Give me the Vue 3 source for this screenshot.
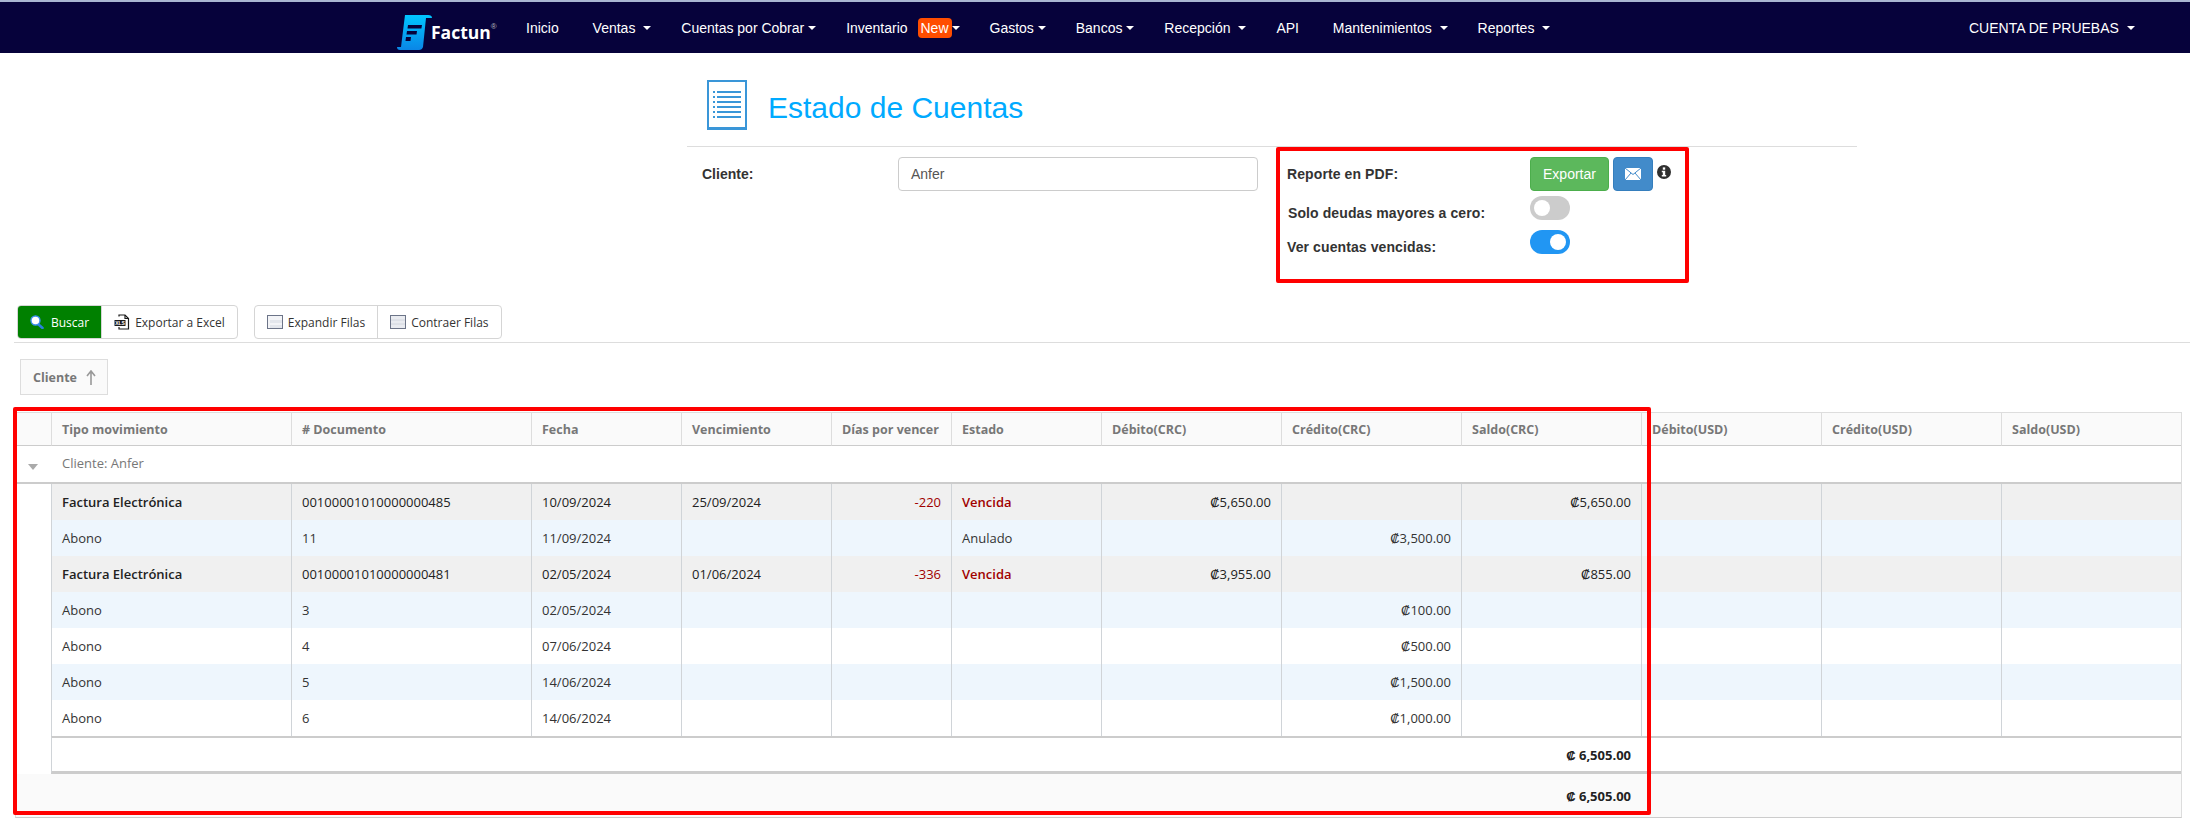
<script setup>
const menu = [
  { label: 'Inicio' },
  { label: 'Ventas', caret: true, spaced: true },
  { label: 'Cuentas por Cobrar', caret: true },
  { label: 'Inventario', caret: true, badge: 'New' },
  { label: 'Gastos', caret: true },
  { label: 'Bancos', caret: true },
  { label: 'Recepción', caret: true, spaced: true },
  { label: 'API' },
  { label: 'Mantenimientos', caret: true, spaced: true },
  { label: 'Reportes', caret: true, spaced: true },
]

const columns = [
  'Tipo movimiento', '# Documento', 'Fecha', 'Vencimiento', 'Días por vencer', 'Estado',
  'Débito(CRC)', 'Crédito(CRC)', 'Saldo(CRC)', 'Débito(USD)', 'Crédito(USD)', 'Saldo(USD)',
]
const widths = [35, 240, 240, 150, 150, 120, 150, 180, 180, 180, 180, 180, 180]

const rows = [
  { tipo: 'Factura Electrónica', doc: '00100001010000000485', fecha: '10/09/2024', venc: '25/09/2024', dias: '-220', estado: 'Vencida', deb: '₡5,650.00', cred: '', saldo: '₡5,650.00', main: true },
  { tipo: 'Abono', doc: '11', fecha: '11/09/2024', venc: '', dias: '', estado: 'Anulado', deb: '', cred: '₡3,500.00', saldo: '' },
  { tipo: 'Factura Electrónica', doc: '00100001010000000481', fecha: '02/05/2024', venc: '01/06/2024', dias: '-336', estado: 'Vencida', deb: '₡3,955.00', cred: '', saldo: '₡855.00', main: true },
  { tipo: 'Abono', doc: '3', fecha: '02/05/2024', venc: '', dias: '', estado: '', deb: '', cred: '₡100.00', saldo: '' },
  { tipo: 'Abono', doc: '4', fecha: '07/06/2024', venc: '', dias: '', estado: '', deb: '', cred: '₡500.00', saldo: '' },
  { tipo: 'Abono', doc: '5', fecha: '14/06/2024', venc: '', dias: '', estado: '', deb: '', cred: '₡1,500.00', saldo: '' },
  { tipo: 'Abono', doc: '6', fecha: '14/06/2024', venc: '', dias: '', estado: '', deb: '', cred: '₡1,000.00', saldo: '' },
]

function rowClass(r, i) {
  if (r.main) return 'row-main'
  return i % 2 === 1 ? 'row-blue' : 'row-white'
}
</script>

<template>
  <div class="page">
    <header class="navbar">
      <a class="logo">
        <svg class="logo-mark" viewBox="0 0 36 36" width="36" height="36">
          <defs>
            <linearGradient id="lg" x1="0" y1="0" x2="0" y2="1">
              <stop offset="0" stop-color="#00c6ff" />
              <stop offset="1" stop-color="#0a86e6" />
            </linearGradient>
          </defs>
          <path d="M8 1 H31 Q35 1 35 4 L29 4 L26 33 Q25 36 22 36 H3 Q0 36 0 33 H4 Z" fill="url(#lg)" />
          <path d="M11 11 H25 L24.4 14.5 H10.5 Z M10 17 H20 L19.5 20.5 H9.5 Z M9 23 H14 L13.5 27 H8.5 Z" fill="#06023b" />
        </svg>
        <span class="logo-text">Factun</span><span class="logo-reg">®</span>
      </a>
      <nav class="menu">
        <a v-for="m in menu" :key="m.label" class="menu-item">
          {{ m.label }}
          <span v-if="m.badge" class="badge">{{ m.badge }}</span>
          <i v-if="m.caret" class="caret" :class="{ spaced: m.spaced }"></i>
        </a>
      </nav>
      <a class="menu-item account">CUENTA DE PRUEBAS <i class="caret spaced"></i></a>
    </header>

    <section class="head">
      <div class="title-row">
        <svg class="doc-icon" viewBox="0 0 40 50" width="40" height="50">
          <rect x="1" y="1" width="38" height="48" fill="#fff" stroke="#3a96d8" stroke-width="2" />
          <rect x="0" y="47" width="40" height="3" fill="#3a96d8" />
          <g fill="#3a96d8">
            <rect x="6" y="11" width="2" height="2" /><rect x="10" y="11" width="24" height="2" />
            <rect x="6" y="16" width="2" height="2" /><rect x="10" y="16" width="24" height="2" />
            <rect x="6" y="21" width="2" height="2" /><rect x="10" y="21" width="24" height="2" />
            <rect x="6" y="26" width="2" height="2" /><rect x="10" y="26" width="24" height="2" />
            <rect x="6" y="31" width="2" height="2" /><rect x="10" y="31" width="24" height="2" />
            <rect x="6" y="36" width="2" height="2" /><rect x="10" y="36" width="24" height="2" />
          </g>
        </svg>
        <h1>Estado de Cuentas</h1>
      </div>
      <div class="filters">
        <div class="client">
          <label>Cliente:</label>
          <div class="input">Anfer</div>
        </div>
        <div class="options">
          <div class="opt opt-1">
            <label>Reporte en PDF:</label>
            <button class="btn btn-green">Exportar</button>
            <button class="btn btn-blue">
              <svg viewBox="0 0 16 12" width="16" height="12">
                <rect width="16" height="12" fill="#fff" />
                <path d="M0 0 L8 6.5 L16 0 M0 12 L6 5 M16 12 L10 5" fill="none" stroke="#428bca" stroke-width="1" />
              </svg>
            </button>
            <svg class="info" viewBox="0 0 14 14" width="14" height="14">
              <circle cx="7" cy="7" r="7" fill="#2f2f2f" />
              <rect x="5.8" y="2.4" width="2.4" height="2.3" fill="#fff" />
              <path d="M4.8 5.8 H8.2 V10 H9.2 V11.4 H4.8 V10 H5.8 V7.2 H4.8 Z" fill="#fff" />
            </svg>
          </div>
          <div class="opt opt-2">
            <label class="indent">Solo deudas mayores a cero:</label>
            <span class="switch"><i></i></span>
          </div>
          <div class="opt opt-3">
            <label>Ver cuentas vencidas:</label>
            <span class="switch on"><i></i></span>
          </div>
        </div>
      </div>
    </section>

    <div class="toolbar">
      <div class="tgroup">
        <a class="tbtn tbtn-search">
          <svg viewBox="0 0 14 14" width="14" height="14">
            <path d="M8 9 L12.5 13" stroke="#2b7fe0" stroke-width="2.6" stroke-linecap="round" />
            <circle cx="5.5" cy="5.5" r="4.5" fill="#fff" stroke="#3d8ff0" stroke-width="1.4" />
          </svg>
          Buscar
        </a>
        <a class="tbtn">
          <svg viewBox="0 0 16 16" width="16" height="16">
            <path d="M5 2.5 V1 H11 L14.5 4.5 V15 H5 V13" fill="#fff" stroke="#1a1a1a" stroke-width="1.2" />
            <path d="M11 1 V4.5 H14.5" fill="none" stroke="#1a1a1a" stroke-width="1.2" />
            <rect x="0.5" y="6" width="11" height="6" fill="#1a1a1a" />
            <text x="6" y="11" text-anchor="middle" font-size="5" font-family="Liberation Sans, sans-serif" font-weight="700" fill="#fff">XLS</text>
          </svg>
          Exportar a Excel
        </a>
      </div>
      <div class="tgroup">
        <a class="tbtn">
          <svg viewBox="0 0 16 14" width="16" height="14">
            <rect x="0.5" y="0.5" width="15" height="13" fill="#f3f4f7" stroke="#6c7488" />
            <rect x="3" y="5" width="12" height="3" fill="#e3e6ec" />
            <rect x="3" y="10" width="12" height="3" fill="#e3e6ec" />
          </svg>
          Expandir Filas
        </a>
        <a class="tbtn">
          <svg viewBox="0 0 16 14" width="16" height="14">
            <rect x="0.5" y="0.5" width="15" height="13" fill="#e9ebf0" stroke="#6c7488" />
            <path d="M1 5 H15 M1 9 H15" stroke="#d2d6de" />
          </svg>
          Contraer Filas
        </a>
      </div>
    </div>

    <div class="groupbar">
      <div class="chip">
        Cliente
        <svg viewBox="0 0 10 15" width="10" height="15">
          <path d="M5 15 V2 M1 6 L5 1 L9 6" fill="none" stroke="#999" stroke-width="1.6" />
        </svg>
      </div>
    </div>

    <div class="grid">
      <table>
        <colgroup>
          <col v-for="(w, i) in widths" :key="i" :style="{ width: w + 'px' }" />
        </colgroup>
        <thead>
          <tr>
            <th class="hier"></th>
            <th v-for="c in columns" :key="c">{{ c }}</th>
          </tr>
        </thead>
        <tbody>
          <tr class="group-row">
            <td class="hier"><i class="tri"></i></td>
            <td colspan="12"><span class="group-text">Cliente: Anfer</span></td>
          </tr>
          <tr v-for="(r, i) in rows" :key="i" :class="rowClass(r, i)">
            <td class="hier"></td>
            <td>{{ r.tipo }}</td>
            <td>{{ r.doc }}</td>
            <td>{{ r.fecha }}</td>
            <td>{{ r.venc }}</td>
            <td class="num red">{{ r.dias }}</td>
            <td :class="{ red: r.main }">{{ r.estado }}</td>
            <td class="num">{{ r.deb }}</td>
            <td class="num">{{ r.cred }}</td>
            <td class="num">{{ r.saldo }}</td>
            <td></td>
            <td></td>
            <td></td>
          </tr>
          <tr class="group-foot">
            <td class="hier"></td>
            <td colspan="9" class="num">₡ 6,505.00</td>
            <td colspan="3"></td>
          </tr>
        </tbody>
        <tfoot>
          <tr>
            <td colspan="10" class="num">₡ 6,505.00</td>
            <td colspan="3"></td>
          </tr>
        </tfoot>
      </table>
    </div>

    <div class="mark mark-options"></div>
    <div class="mark mark-table"></div>
  </div>
</template>

<style>
html, body { margin: 0; padding: 0; background: #fff; overflow: hidden; }
</style>

<style scoped>
.page {
  position: relative;
  width: 2190px;
  height: 823px;
  overflow: hidden;
  font-family: "Liberation Sans", Arial, sans-serif;
  font-size: 14px;
  color: #333;
}

.navbar {
  display: flex;
  align-items: center;
  height: 51px;
  border-top: 2px solid #a9b6d2;
  background: #06023b;
  padding-left: 397px;
  box-sizing: content-box;
}
.logo { display: flex; align-items: center; width: 114px; flex: none; }
.logo-mark { flex: none; margin-top: 8px; }
.logo-text {
  margin-left: -2px;
  margin-top: 8px;
  font-family: "Open Sans", sans-serif;
  font-weight: 700;
  font-size: 17.5px;
  color: #fff;
}
.logo-reg { font-size: 8px; color: #bbb; margin-top: -2px; }
.menu { display: flex; align-items: center; }
.menu-item {
  display: flex;
  align-items: center;
  padding: 0 15px;
  color: #fff;
  white-space: pre;
  font-size: 14px;
}
.badge {
  margin-left: 6px;
  width: 34px;
  height: 20px;
  line-height: 20px;
  text-align: center;
  background: #ff4d00;
  border-radius: 4px;
  color: #fff;
}
.caret {
  width: 0;
  height: 0;
  margin-left: 0;
  border-top: 4px solid #fff;
  border-left: 4px solid transparent;
  border-right: 4px solid transparent;
}
.caret.spaced { margin-left: 4px; }
.account { position: absolute; left: 1954px; top: 2px; height: 51px; }

.head { width: 1170px; margin-left: 687px; }
.title-row {
  display: flex;
  align-items: flex-start;
  margin-top: 27px;
  padding: 0 0 16px 20px;
  border-bottom: 1px solid #ddd;
}
.doc-icon { flex: none; }
h1 {
  margin: 11px 0 0 21px;
  font-size: 30px;
  line-height: 34px;
  font-weight: 400;
  color: #0af;
}
.filters { display: flex; height: 158px; padding-top: 10px; box-sizing: border-box; }
.client { display: flex; width: 600px; flex: none; padding-left: 15px; box-sizing: border-box; }
.client label { width: 196px; line-height: 34px; font-weight: 700; }
.input {
  width: 360px;
  height: 34px;
  box-sizing: border-box;
  border: 1px solid #ccc;
  border-radius: 4px;
  padding: 0 12px;
  line-height: 32px;
  color: #555;
}
.options { display: flex; flex-direction: column; }
.opt { display: flex; align-items: flex-start; }
.opt label { width: 243px; font-weight: 700; letter-spacing: 0.1px; }
.opt-1 { height: 34px; margin-bottom: 5px; }
.opt-1 label { line-height: 34px; }
.opt-2 { height: 24px; margin-bottom: 10px; }
.opt-2 label { line-height: 34px; }
.opt-3 { height: 24px; }
.opt-3 label { line-height: 34px; }
.opt .indent { padding-left: 1px; width: 242px; }
.btn {
  height: 34px;
  border: 1px solid transparent;
  border-radius: 4px;
  color: #fff;
  font: inherit;
  padding: 0;
  display: flex;
  align-items: center;
  justify-content: center;
}
.btn-green { width: 79px; background: #5cb85c; border-color: #4cae4c; }
.btn-blue { width: 40px; margin-left: 4px; background: #428bca; border-color: #357ebd; }
.info { margin: 8px 0 0 4px; flex: none; }
.switch {
  display: block;
  position: relative;
  width: 40px;
  height: 24px;
  border-radius: 12px;
  background: #ccc;
}
.switch i {
  position: absolute;
  left: 4px;
  top: 4px;
  width: 16px;
  height: 16px;
  border-radius: 50%;
  background: #fff;
}
.switch.on { background: #2196f3; }
.switch.on i { left: 20px; }

.toolbar {
  display: flex;
  gap: 16px;
  margin-left: 14px;
  padding: 0 0 3px 3px;
  border-bottom: 1px solid #ddd;
  font-family: "Open Sans", sans-serif;
  font-size: 12px;
}
.tgroup {
  display: flex;
  height: 34px;
  box-sizing: border-box;
  border: 1px solid #d5d5d5;
  border-radius: 4px;
  overflow: hidden;
}
.tbtn {
  display: flex;
  align-items: center;
  gap: 5px;
  padding: 0 12px 0 12px;
  color: #333;
  border-left: 1px solid #d5d5d5;
}
.tbtn:first-child { border-left: 0; }
.tbtn-search { background: #008000; color: #fff; gap: 7px; }

.groupbar { padding: 16px 0 17px 20px; font-family: "Open Sans", sans-serif; }
.chip {
  display: flex;
  align-items: center;
  gap: 9px;
  width: 88px;
  height: 36px;
  box-sizing: border-box;
  padding-left: 12px;
  border: 1px solid #ddd;
  background: #fafafa;
  color: #777;
  font-size: 12.5px;
  font-weight: 700;
}

.grid {
  margin-left: 15px;
  width: 2167px;
  box-sizing: border-box;
  border: 1px solid #ddd;
  border-right: 1px solid #ddd;
  border-bottom: 1px solid #ccc;
  font-family: "Open Sans", sans-serif;
  font-size: 13px;
}
table {
  table-layout: fixed;
  border-collapse: separate;
  border-spacing: 0;
  width: 2165px;
}
th {
  height: 33px;
  padding: 0 10px;
  box-sizing: border-box;
  background: #fafafa;
  color: #777;
  font-weight: 700;
  font-size: 12.5px;
  text-align: left;
  white-space: nowrap;
  border-left: 1px solid #ddd;
  border-bottom: 1px solid #ccc;
}
th.hier { border-left: 0; }
td {
  height: 36px;
  padding: 0 10px;
  box-sizing: border-box;
  border-left: 1px solid #d0d4d8;
  white-space: nowrap;
  overflow: hidden;
}
td.hier { border-left: 0; background: #fff; padding: 0; }
.num { text-align: right; }
.red { color: #a00000; }
.group-row td { border-left: 0; height: 38px; border-bottom: 2px solid #ccc; }
.group-text { color: #777; position: relative; top: -1px; margin-left: 1px; }
.tri {
  display: block;
  width: 0;
  height: 0;
  margin: 6px 0 0 12px;
  border-top: 6px solid #aaa;
  border-left: 5px solid transparent;
  border-right: 5px solid transparent;
}
.row-main td:not(.hier) { background: #f0f0f0; }
.row-main td:nth-child(2), .row-main td.red { font-weight: 600; }
.row-main td.num.red { font-weight: 400; }
.row-main td { color: #222; }
.row-main td.red { color: #a00000; }
.row-blue td:not(.hier) { background: #eef6fd; }
.row-white td:not(.hier) { background: #fff; }
.group-foot td {
  height: 38px;
  font-weight: 700;
  color: #222;
  border-top: 2px solid #ccc;
  border-bottom: 3px solid #ccc;
}
.group-foot td:nth-child(3) { border-left: 0; }
.group-foot td.hier { border-top: 0; border-bottom: 0; }
tfoot td {
  height: 43px;
  background: #fafafa;
  font-weight: 700;
  color: #222;
  border-left: 0;
}

.mark {
  position: absolute;
  box-sizing: border-box;
  border: 4px solid #f00;
  border-radius: 2px;
  pointer-events: none;
}
.mark-options { left: 1276px; top: 147px; width: 413px; height: 136px; }
.mark-table { left: 13px; top: 407px; width: 1638px; height: 408px; }
</style>
